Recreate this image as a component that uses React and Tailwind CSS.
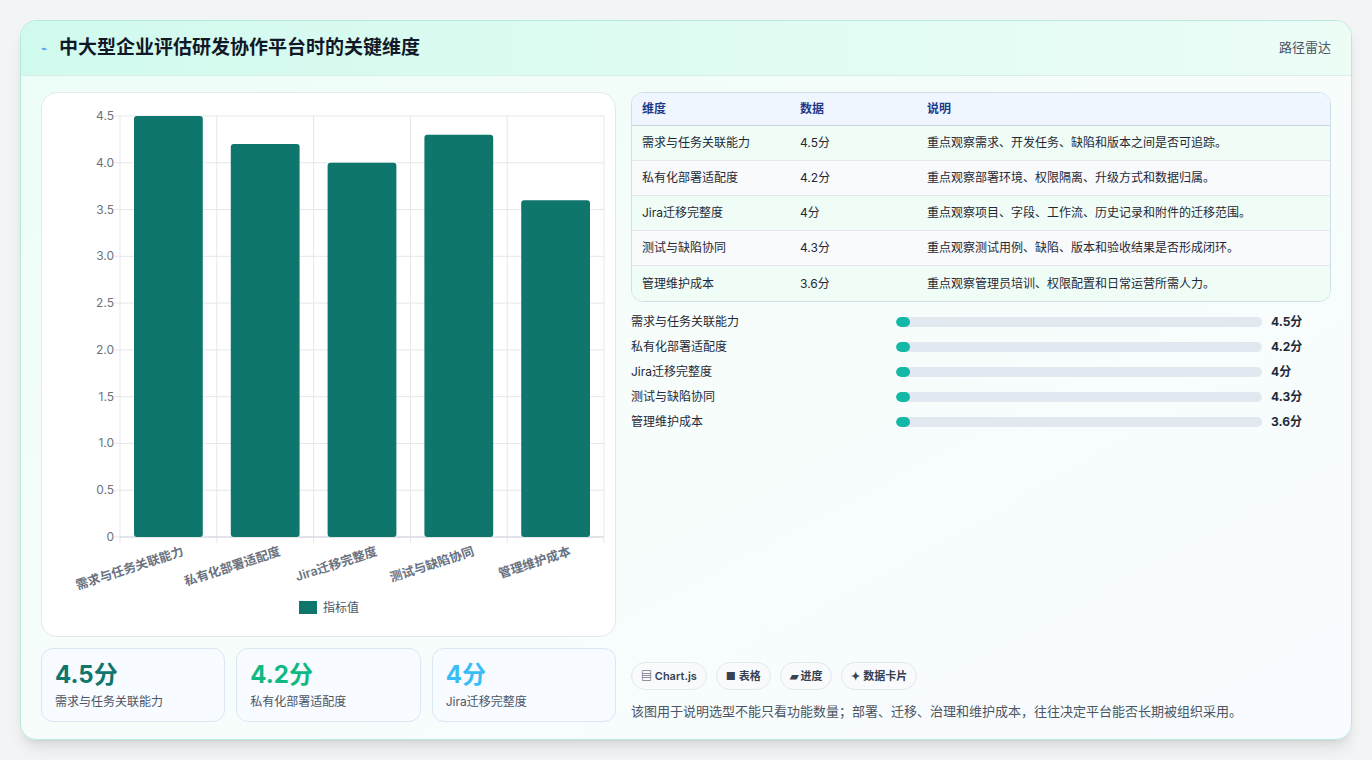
const rows = [
  { name: '需求与任务关联能力', v: 4.5, note: '重点观察需求、开发任务、缺陷和版本之间是否可追踪。' },
  { name: '私有化部署适配度', v: 4.2, note: '重点观察部署环境、权限隔离、升级方式和数据归属。' },
  { name: 'Jira迁移完整度', v: 4, note: '重点观察项目、字段、工作流、历史记录和附件的迁移范围。' },
  { name: '测试与缺陷协同', v: 4.3, note: '重点观察测试用例、缺陷、版本和验收结果是否形成闭环。' },
  { name: '管理维护成本', v: 3.6, note: '重点观察管理员培训、权限配置和日常运营所需人力。' },
];

function Chart() {
  const x0 = 78, x1 = 562, y0 = 444, yTop = 23;
  const h = y0 - yTop;
  const step = (x1 - x0) / 5;
  const ticks = [0, 0.5, 1, 1.5, 2, 2.5, 3, 3.5, 4, 4.5];
  return (
    <svg width="573" height="542" className="block">
      {ticks.map((t) => {
        const y = y0 - (t / 4.5) * h;
        return (
          <g key={t}>
            <line x1={x0 - 6} x2={x1} y1={y} y2={y} stroke="#e5e7eb" />
            <text x={x0 - 6} y={y + 4} textAnchor="end" fontSize="12" fill="#6b7280">{t === 0 ? '0' : t.toFixed(1)}</text>
          </g>
        );
      })}
      {[0, 1, 2, 3, 4, 5].map((i) => (
        <line key={i} x1={x0 + i * step} x2={x0 + i * step} y1={yTop} y2={y0 + 6} stroke="#e5e7eb" />
      ))}
      <line x1={x0} x2={x1} y1={y0} y2={y0} stroke="#d1d5db" />
      {rows.map((r, i) => {
        const bh = (r.v / 4.5) * h;
        const bx = x0 + i * step + 14;
        return <rect key={r.name} x={bx} y={y0 - bh} width={step - 28} height={bh} rx="3" fill="#0f766e" />;
      })}
      {rows.map((r, i) => {
        const cx = x0 + i * step + step / 2 + 16;
        return (
          <text key={r.name} x={cx} y={y0 + 18} textAnchor="end" fontSize="12.5" fontWeight="600" fill="#6b7280" transform={`rotate(-18 ${cx} ${y0 + 18})`}>{r.name}</text>
        );
      })}
      <rect x="257" y="508" width="18" height="13" fill="#0f766e" />
      <text x="281" y="519" fontSize="12" fill="#4b5563">指标值</text>
    </svg>
  );
}

export default function App() {
  return (
    <div className="w-[1372px] h-[760px] bg-[#f3f4f6] p-5 pb-0" style={{ fontFamily: 'Inter, "Noto Sans CJK SC", sans-serif' }}>
      <div className="h-[720px] rounded-2xl border border-[#b7eadf] bg-gradient-to-br from-[#ecfdf7] via-[#f7fdfb] to-[#f8fbff] shadow-lg overflow-hidden">
        <div className="h-[55px] flex items-center justify-between px-5 bg-gradient-to-r from-[#d1faee] to-[#ecfdf6] border-b border-[#d5efe7]">
          <div className="flex items-center gap-3">
            <span className="text-[#3b82f6] text-[10px]">⌁</span>
            <h1 className="text-[19px] font-bold text-[#111827]">中大型企业评估研发协作平台时的关键维度</h1>
          </div>
          <span className="text-[13px] text-[#4b5563]">路径雷达</span>
        </div>
        <div className="flex gap-[15px] px-5 pt-4">
          <div className="w-[575px] flex flex-col gap-[11px]">
            <div className="h-[545px] bg-white rounded-2xl border border-[#e2e8f0]">
              <Chart />
            </div>
            <div className="grid grid-cols-3 gap-[11px]">
              {[['4.5分', 'text-[#0f766e]', rows[0].name], ['4.2分', 'text-[#10b981]', rows[1].name], ['4分', 'text-[#38bdf8]', rows[2].name]].map(([v, c, n]) => (
                <div key={n} className="h-[74px] rounded-xl border border-[#dbe7f3] bg-[#f8fbff] px-[13px] pt-3">
                  <div className={`text-[24px] font-bold leading-7 ${c}`}>{v}</div>
                  <div className="text-[12px] text-[#4b5563] mt-1">{n}</div>
                </div>
              ))}
            </div>
          </div>
          <div className="w-[704px] flex flex-col">
            <div className="rounded-xl border border-[#cfdfe9] overflow-hidden bg-white text-[12px]">
              <div className="flex h-[33px] items-center bg-[#eff6ff] border-b border-[#cbd5e1] text-[#1e3a8a] font-semibold">
                <div className="w-[168px] pl-[10px]">维度</div>
                <div className="w-[127px]">数据</div>
                <div>说明</div>
              </div>
              {rows.map((r, i) => (
                <div key={r.name} className={`flex h-[35px] items-center text-[#1f2937] ${i < 4 ? 'border-b border-[#e5e7eb]' : ''} ${i % 2 ? 'bg-[#f8fafc]' : 'bg-[#f0fdf6]'}`}>
                  <div className="w-[168px] pl-[10px]">{r.name}</div>
                  <div className="w-[127px]">{r.v}分</div>
                  <div>{r.note}</div>
                </div>
              ))}
            </div>
            <div className="mt-3 flex flex-col gap-[9px] text-[12px] text-[#1f2937]">
              {rows.map((r) => (
                <div key={r.name} className="flex items-center h-[16px]">
                  <div className="w-[265px]">{r.name}</div>
                  <div className="w-[366px] h-[10px] rounded-full bg-[#e2e8f0] overflow-hidden">
                    <div className="h-full w-[14px] rounded-full bg-[#14b8a6]" />
                  </div>
                  <div className="ml-[9px] font-bold">{r.v}分</div>
                </div>
              ))}
            </div>
            <div className="mt-[232px] flex gap-[9px]">
              {['▤ Chart.js', '■ 表格', '▰ 进度', '✦ 数据卡片'].map((t) => (
                <span key={t} className="h-[28px] px-[9px] flex items-center rounded-full border border-[#e2e8f0] bg-[#f8fafc] text-[11px] font-semibold text-[#374151]">{t}</span>
              ))}
            </div>
            <p className="mt-[12px] text-[13px] text-[#4b5563]">该图用于说明选型不能只看功能数量；部署、迁移、治理和维护成本，往往决定平台能否长期被组织采用。</p>
          </div>
        </div>
      </div>
    </div>
  );
}
